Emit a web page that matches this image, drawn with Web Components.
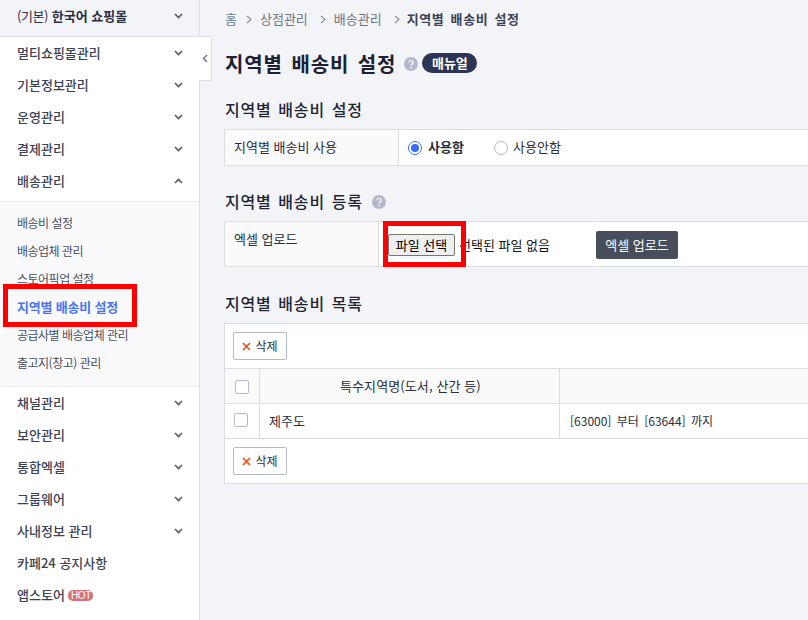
<!DOCTYPE html>
<html lang="ko">
<head>
<meta charset="utf-8">
<title>지역별 배송비 설정</title>
<style>
  html, body { margin: 0; height: 100%; overflow: hidden; }
  body {
    background: #f3f4f8;
    color: #1f2433;
    font: 13px/1.4 "Noto Sans CJK KR", "Noto Sans", sans-serif;
  }
</style>
</head>
<body>
<admin-shell>
  <side-nav slot="side">
    <nav-item slot="store" kind="store" arrow="down"><span style="font-weight:400;letter-spacing:-.4px">(기본)</span> 한국어 쇼핑몰</nav-item>
    <nav-item arrow="down">멀티쇼핑몰관리</nav-item>
    <nav-item arrow="down">기본정보관리</nav-item>
    <nav-item arrow="down">운영관리</nav-item>
    <nav-item arrow="down">결제관리</nav-item>
    <nav-item arrow="up">배송관리</nav-item>
    <sub-menu>
      <sub-item>배송비 설정</sub-item>
      <sub-item>배송업체 관리</sub-item>
      <sub-item>스토어픽업 설정</sub-item>
      <sub-item active>지역별 배송비 설정</sub-item>
      <sub-item>공급사별 배송업체 관리</sub-item>
      <sub-item>출고지(창고) 관리</sub-item>
    </sub-menu>
    <nav-item arrow="down">채널관리</nav-item>
    <nav-item arrow="down">보안관리</nav-item>
    <nav-item arrow="down">통합엑셀</nav-item>
    <nav-item arrow="down">그룹웨어</nav-item>
    <nav-item arrow="down">사내정보 관리</nav-item>
    <nav-item>카페24 공지사항</nav-item>
    <nav-item>앱스토어 <hot-badge>HOT</hot-badge></nav-item>
  </side-nav>

  <bread-crumbs current="지역별 배송비 설정" items="홈,상점관리,배송관리"></bread-crumbs>

  <page-title>지역별 배송비 설정</page-title>

  <section-title top="19">지역별 배송비 설정</section-title>
  <form-row label="지역별 배송비 사용" th="174" height="35">
    <radio-option checked>사용함</radio-option>
    <radio-option>사용안함</radio-option>
  </form-row>

  <section-title top="24" help>지역별 배송비 등록</section-title>
  <upload-row></upload-row>

  <section-title top="25">지역별 배송비 목록</section-title>
  <list-panel></list-panel>
</admin-shell>

<script>
  const chevron = dir => `<svg width="9" height="6" viewBox="0 0 9 6" aria-hidden="true">
    <path d="${dir === 'up' ? 'M1 5l3.500-3.500L8 5' : 'M1 1l3.500 3.500L8 1'}" fill="none" stroke="#555a6b" stroke-width="1.6"/></svg>`;

  const helpIcon = `<svg width="14" height="14" viewBox="0 0 14 14" aria-hidden="true">
    <circle cx="7" cy="7" r="7" fill="#b4b8cb"/>
    <path d="M5 5.400a2 2 0 1 1 3 1.700c-.7.4-1 .7-1 1.500" fill="none" stroke="#fff" stroke-width="1.400"/>
    <circle cx="7" cy="10.600" r=".9" fill="#fff"/></svg>`;

  class AdminShell extends HTMLElement {
    constructor() {
      super();
      this.attachShadow({ mode: 'open' }).innerHTML = `
        <style>
          :host { display: flex; width: 808px; height: 620px; overflow: hidden; position: relative; }
          .side { flex: 0 0 200px; }
          main { flex: 1; min-width: 0; padding-left: 24px; }
          .toggle {
            position: absolute; left: 199px; top: 36px; width: 13px; height: 45px; box-sizing: border-box;
            background: #fff; border: 1px solid #dcdfe8; border-left: 0;
            display: flex; align-items: center; justify-content: center;
          }
        </style>
        <div class="side"><slot name="side"></slot></div>
        <div class="toggle">
          <svg width="6" height="9" viewBox="0 0 6 9" aria-hidden="true"><path d="M5 1L1.500 4.500 5 8" fill="none" stroke="#6d7283" stroke-width="1.400"/></svg>
        </div>
        <main><slot></slot></main>`;
    }
  }

  class SideNav extends HTMLElement {
    constructor() {
      super();
      this.attachShadow({ mode: 'open' }).innerHTML = `
        <style>
          :host { display: block; width: 200px; height: 620px; box-sizing: border-box; background: #fff; border-right: 1px solid #dcdfe8; }
          .store { background: #f3f4f8; height: 36px; border-bottom: 1px solid #dcdfe8; }
        </style>
        <div class="store"><slot name="store"></slot></div>
        <div><slot></slot></div>`;
    }
  }

  class NavItem extends HTMLElement {
    constructor() {
      super();
      const arrow = this.getAttribute('arrow');
      const store = this.getAttribute('kind') === 'store';
      this.attachShadow({ mode: 'open' }).innerHTML = `
        <style>
          :host {
            display: flex; align-items: center; justify-content: space-between;
            height: 32px; padding: 0 16px 0 17px;
            font-size: 13px; font-weight: ${store ? 700 : 500}; color: ${store ? '#2a2f3f' : '#3d4252'};
          }
          svg { display: block; }
        </style>
        <span><slot></slot></span>${arrow ? chevron(arrow) : ''}`;
    }
  }

  class SubMenu extends HTMLElement {
    constructor() {
      super();
      this.attachShadow({ mode: 'open' }).innerHTML = `
        <style>
          :host {
            display: block; background: #fafafc; padding: 7px 0 9px; margin-top: 4px;
            border-top: 1px solid #eceef3; border-bottom: 1px solid #eceef3;
          }
        </style>
        <slot></slot>`;
    }
  }

  class SubItem extends HTMLElement {
    constructor() {
      super();
      const active = this.hasAttribute('active');
      this.attachShadow({ mode: 'open' }).innerHTML = `
        <style>
          :host {
            display: flex; align-items: center; height: 28px; padding-left: 17px; position: relative;
            font-size: ${active ? 13 : 12}px; letter-spacing: ${active ? -.2 : -.5}px;
            color: ${active ? '#4a74f5' : '#4b4f5c'}; font-weight: ${active ? 700 : 400};
          }
          .mark {
            position: absolute; left: 3px; top: -9px; width: 134px; height: 43px;
            box-sizing: border-box; border: 5px solid #fe0000;
          }
        </style>
        <slot></slot>${active ? '<div class="mark"></div>' : ''}`;
    }
  }

  class HotBadge extends HTMLElement {
    constructor() {
      super();
      this.attachShadow({ mode: 'open' }).innerHTML = `
        <style>
          :host {
            display: inline-block; vertical-align: 1px; width: 25px; height: 11px; text-align: center;
            background: #d8727a; color: #fff; border-radius: 5px; letter-spacing: -.3px;
            font: 400 10px/11px "Liberation Sans", sans-serif;
          }
        </style>
        <slot></slot>`;
    }
  }

  class BreadCrumbs extends HTMLElement {
    constructor() {
      super();
      const items = this.getAttribute('items').split(',');
      const sep = `<svg width="6" height="9" viewBox="0 0 6 9" aria-hidden="true"><path d="M1 1l4 3.500-4 3.500" fill="none" stroke="#8a8f9e" stroke-width="1.100"/></svg>`;
      this.attachShadow({ mode: 'open' }).innerHTML = `
        <style>
          :host { display: flex; align-items: center; height: 38px; padding-left: 1px; font-size: 13px; color: #6f7482; }
          svg { margin: 0 8px 0 12px; }
          b { font-weight: 700; color: #3d4252; letter-spacing: .6px; word-spacing: 2px; margin-left: -1px; }
          .home { color: #5f7d92; margin-right: -3px; }
        </style>
        ${items.map((t, i) => `<span class="${i ? '' : 'home'}">${t}</span>${sep}`).join('')}
        <b>${this.getAttribute('current')}</b>`;
    }
  }

  class PageTitle extends HTMLElement {
    constructor() {
      super();
      this.attachShadow({ mode: 'open' }).innerHTML = `
        <style>
          :host { display: flex; align-items: center; height: 30px; margin-top: 11px; padding-left: 1px; }
          h1 { margin: 0; font-size: 20px; font-weight: 700; color: #1d2130; word-spacing: 2px; letter-spacing: .9px; }
          svg { margin: 0 4px 0 8px; }
          .pill {
            height: 20px; width: 55px; border-radius: 10px; background: #2c3555; color: #fff;
            font-size: 13px; font-weight: 700; line-height: 20px; text-align: center; margin-top: -2px;
          }
        </style>
        <h1><slot></slot></h1>${helpIcon}<div class="pill">매뉴얼</div>`;
    }
  }

  class SectionTitle extends HTMLElement {
    constructor() {
      super();
      this.attachShadow({ mode: 'open' }).innerHTML = `
        <style>
          :host { display: flex; align-items: center; height: 24px; margin-top: ${this.getAttribute('top')}px; margin-bottom: 7px; padding-left: 1px; }
          h2 { margin: 0 0 2px; font-size: 16px; font-weight: 500; color: #1f2433; letter-spacing: .8px; word-spacing: 1.500px; }
          svg { margin-left: 9px; }
        </style>
        <h2><slot></slot></h2>${this.hasAttribute('help') ? helpIcon : ''}`;
    }
  }

  class FormRow extends HTMLElement {
    constructor() {
      super();
      this.attachShadow({ mode: 'open' }).innerHTML = `
        <style>
          :host {
            display: flex; height: ${this.getAttribute('height')}px; width: 700px; box-sizing: content-box;
            border: 1px solid #dcdddf; background: #fff; font-size: 13px;
          }
          .th {
            flex: 0 0 ${this.getAttribute('th') - 10}px; padding-left: 9px; background: #fafafa; border-right: 1px solid #dcdddf;
            display: flex; align-items: center; color: #2a2e3a;
          }
          .td { display: flex; align-items: center; padding-left: 9px; gap: 24px; }
        </style>
        <div class="th">${this.getAttribute('label')}</div>
        <div class="td"><slot></slot></div>`;
    }
  }

  class RadioOption extends HTMLElement {
    constructor() {
      super();
      const on = this.hasAttribute('checked');
      this.attachShadow({ mode: 'open' }).innerHTML = `
        <style>
          :host { display: inline-flex; align-items: center; gap: ${on ? 6 : 5}px; font-size: 13px; font-weight: ${on ? 700 : 400}; color: #2a2e3a; ${on ? 'width: 62px;' : ''} }
          .r {
            width: 14px; height: 14px; box-sizing: border-box; border-radius: 50%; background: #fff; flex: none;
            border: 1px solid ${on ? '#3a6cf0' : '#b4b8cb'}; display: flex; align-items: center; justify-content: center;
          }
          .r i { width: 8px; height: 8px; border-radius: 50%; background: #3a6cf0; }
        </style>
        <span class="r">${on ? '<i></i>' : ''}</span><slot></slot>`;
    }
  }

  class UploadRow extends HTMLElement {
    constructor() {
      super();
      this.attachShadow({ mode: 'open' }).innerHTML = `
        <style>
          :host {
            display: flex; height: 44px; width: 700px; border: 1px solid #dcdddf; background: #fff;
            font-size: 13px; color: #111; position: relative;
          }
          .th {
            flex: 0 0 144px; padding: 8px 0 0 9px; background: #fafafa; border-right: 1px solid #dcdddf;
            color: #2a2e3a;
          }
          .td { display: flex; align-items: center; padding-left: 9px; }
          .file {
            width: 67px; height: 22px; box-sizing: border-box; margin-top: 2px;
            border: 1px solid #767676; border-radius: 2px; background: #efefef; color: #000;
            font: inherit; padding: 0;
          }
          .none { margin: 2px 0 0 4px; width: 137px; }
          .send {
            width: 82px; height: 28px; box-sizing: border-box; border: 0; border-radius: 2px; margin-top: 2px;
            background: #474d5b; color: #fff; font: inherit; padding: 0;
          }
          .mark {
            position: absolute; left: 158px; top: -1px; width: 83px; height: 46px;
            box-sizing: border-box; border: 5px solid #fe0000;
          }
        </style>
        <div class="th">엑셀 업로드</div>
        <div class="td">
          <button class="file">파일 선택</button>
          <span class="none">선택된 파일 없음</span>
          <button class="send">엑셀 업로드</button>
        </div>
        <div class="mark"></div>`;
    }
  }

  class DeleteButton extends HTMLElement {
    constructor() {
      super();
      this.attachShadow({ mode: 'open' }).innerHTML = `
        <style>
          :host {
            display: inline-flex; align-items: center; justify-content: center; gap: 4px;
            width: 54px; height: 28px; box-sizing: border-box; background: #fff;
            border: 1px solid #b4b8cb; border-radius: 2px; font-size: 12px; color: #2a2e3a;
          }
        </style>
        <svg width="9" height="9" viewBox="0 0 9 9" aria-hidden="true"><path d="M1 1l7 7M8 1L1 8" stroke="#f04e12" stroke-width="1.700"/></svg>
        <slot></slot>`;
    }
  }

  class CheckBox extends HTMLElement {
    constructor() {
      super();
      this.attachShadow({ mode: 'open' }).innerHTML = `
        <style>
          :host {
            display: block; width: 14px; height: 14px; box-sizing: border-box;
            background: #fff; border: 1px solid #b4b8cb; border-radius: 2px;
          }
        </style>`;
    }
  }

  class ListPanel extends HTMLElement {
    constructor() {
      super();
      this.attachShadow({ mode: 'open' }).innerHTML = `
        <style>
          :host { display: block; width: 700px; border: 1px solid #dcdddf; background: #fff; font-size: 13px; color: #2a2e3a; }
          .bar { height: 44px; padding-left: 8px; display: flex; align-items: center; }
          .row { display: grid; grid-template-columns: 34px 300px 1fr; height: 34px; border-top: 1px solid #dcdddf; }
          .row.head { background: #fafafa; }
          .row > div { display: flex; align-items: center; border-left: 1px solid #dcdddf; }
          .row > div:first-child { border-left: 0; justify-content: center; }
          .head check-box { margin-top: 2px; }
          .body check-box { margin: 0 2px 2px 0; }
          .name { padding-left: 9px; }
          .head .name { padding-left: 80px; letter-spacing: .1px; }
          .range { padding-left: 10px; font-size: 12px; word-spacing: 2px; }
          .foot { border-top: 1px solid #dcdddf; }
        </style>
        <div class="bar"><delete-button>삭제</delete-button></div>
        <div class="row head"><div><check-box></check-box></div><div class="name">특수지역명(도서, 산간 등)</div><div></div></div>
        <div class="row body"><div><check-box></check-box></div><div class="name">제주도</div><div class="range">[63000] 부터 [63644] 까지</div></div>
        <div class="bar foot"><delete-button>삭제</delete-button></div>`;
    }
  }

  customElements.define('admin-shell', AdminShell);
  customElements.define('side-nav', SideNav);
  customElements.define('nav-item', NavItem);
  customElements.define('sub-menu', SubMenu);
  customElements.define('sub-item', SubItem);
  customElements.define('hot-badge', HotBadge);
  customElements.define('bread-crumbs', BreadCrumbs);
  customElements.define('page-title', PageTitle);
  customElements.define('section-title', SectionTitle);
  customElements.define('form-row', FormRow);
  customElements.define('radio-option', RadioOption);
  customElements.define('upload-row', UploadRow);
  customElements.define('delete-button', DeleteButton);
  customElements.define('check-box', CheckBox);
  customElements.define('list-panel', ListPanel);
</script>
</body>
</html>
